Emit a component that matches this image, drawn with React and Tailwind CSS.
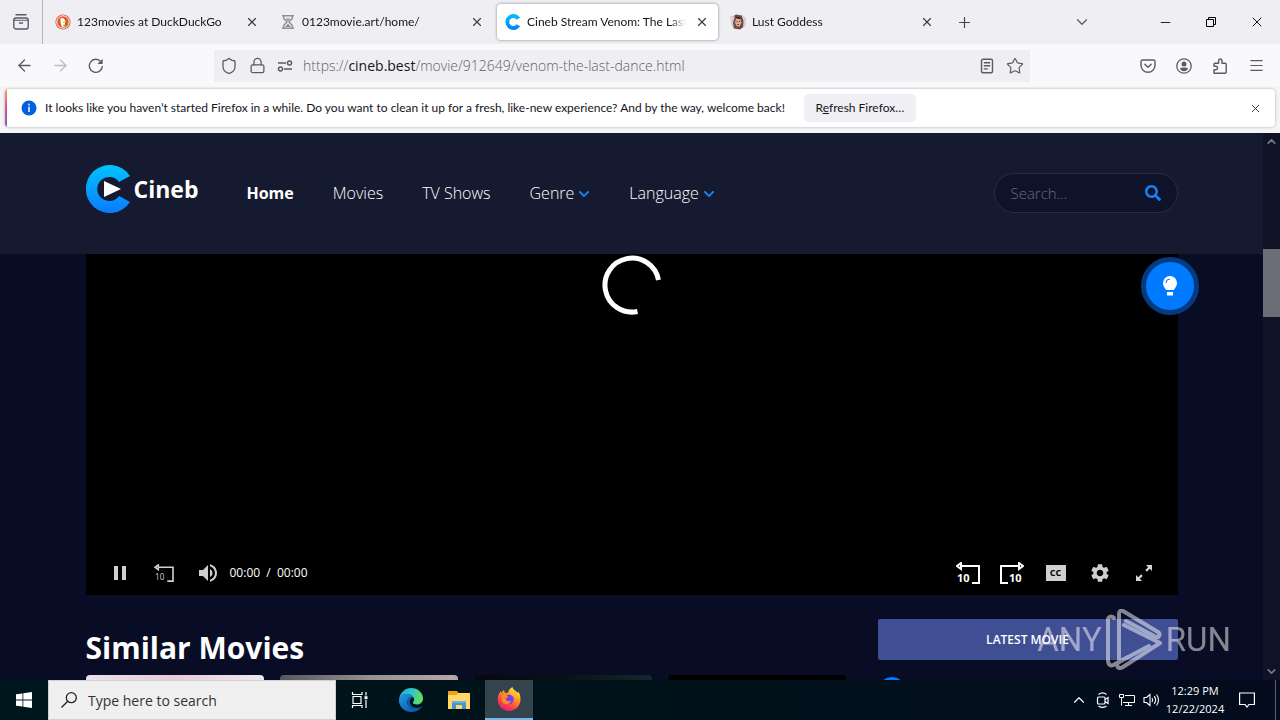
import React from 'react';
import {
  ArrowLeft,
  ArrowRight,
  ChevronDown,
  ChevronUp,
  Lock,
  Menu,
  Minus,
  Plus,
  Shield,
  Star,
  X,
} from 'lucide-react';
import { FaChevronDown, FaSearch } from 'react-icons/fa';
import { MdPause, MdSettings, MdVolumeUp } from 'react-icons/md';

const CinebMark = ({ className, play }) => (
  <svg viewBox="0 0 45 48" className={className} aria-hidden="true">
    <defs>
      <linearGradient id="cineb" x1="0" y1="0" x2="0" y2="1">
        <stop offset="0" stopColor="#00c3ff" />
        <stop offset="1" stopColor="#0a7cff" />
      </linearGradient>
    </defs>
    <path d="M44 11A24 24 0 1 0 44 37L33 31A12 12 0 1 1 33 17Z" fill="url(#cineb)" />
    {play && <path d="M18 16v16l17-8z" fill="#fff" />}
  </svg>
);

const DuckIcon = () => (
  <svg viewBox="0 0 16 16" className="size-4">
    <circle cx="8" cy="8" r="7.6" fill="#de5833" />
    <circle cx="8" cy="8" r="6.2" fill="none" stroke="#fff" strokeWidth="1" />
    <path d="M5.6 4.2c2-.9 4.400.3 4.500 2.800.1 2-.6 3 .2 4.900-1.400 1-2.600 1-3.600.5C6 10.500 5 7 5.600 4.200z" fill="#fff" />
    <path d="M8 7.600h3.300l-1.400 1.200L8 9z" fill="#fdd20a" />
    <path d="M8.500 10.300l2.800 1-.2 1.200-2.600-.6z" fill="#65bc46" />
  </svg>
);

const HourglassIcon = () => (
  <svg viewBox="0 0 16 16" className="size-4" fill="none" stroke="#8f8f96" strokeWidth="1.4">
    <path d="M2 1.700h12M2 14.300h12M3.700 2v2.500L7 8l-3.300 3.500V14M12.300 2v2.500L9 8l3.300 3.500V14" />
    <path d="M5.500 4.500h5L8 7.300zM5 13l3-3.200L11 13z" fill="#8f8f96" stroke="none" />
  </svg>
);

const GoddessIcon = () => (
  <svg viewBox="0 0 16 16" className="size-4">
    <path d="M2 3l4-2.500 6 1 3 4-1 7-4 3-6-1L1 9z" fill="#6b4a4c" />
    <path d="M0 2l5 .5-2 6 1 5-3-4zM11 0l5 4v7l-3 3 .5-7z" fill="#d8d0d3" />
    <path d="M6 4.500h4l1.500 4-2 4H7l-2-3.500z" fill="#e2ac94" />
    <path d="M5.500 3l3 1.500L11 4M6.500 7.500h1M9 7.500h1" stroke="#4a2026" />
    <path d="M7 10.500h2" stroke="#b32a35" />
  </svg>
);

const TabsIcon = () => (
  <svg viewBox="0 0 16 16" className="size-4" fill="none" stroke="#5b5b66" strokeWidth="1.400" strokeLinecap="round">
    <path d="M3 .8h10M6.500 9h3" />
    <rect x=".8" y="4" width="14.400" height="11" rx="2.200" />
    <path d="M1 6.300h14" strokeWidth="1" />
  </svg>
);

const ReloadIcon = () => (
  <svg viewBox="0 0 16 16" className="size-4" fill="none" stroke="#5b5b66" strokeWidth="1.400" strokeLinecap="round">
    <path d="M14.300 8.600A6.500 6.500 0 1 1 12.800 3.600" />
    <path d="M14.700.8v5.300H9.400z" fill="#5b5b66" stroke="none" />
  </svg>
);

const PermissionsIcon = () => (
  <svg viewBox="0 0 16 16" className="size-4" fill="none" stroke="#5b5b66" strokeWidth="1.500">
    <path d="M1 5h8M7 11h8" />
    <circle cx="12.500" cy="5" r="2" />
    <circle cx="3.500" cy="11" r="2" />
  </svg>
);

const ReaderIcon = () => (
  <svg viewBox="0 0 16 16" className="size-4" fill="none" stroke="#5b5b66" strokeWidth="1.400" strokeLinecap="round">
    <rect x="2.500" y="1.200" width="11" height="13.500" rx="1.500" />
    <path d="M5.300 4.700h5.400M5.300 7.800h5.400M5.300 10.900h3" />
  </svg>
);

const PocketIcon = () => (
  <svg viewBox="0 0 16 16" className="size-4" fill="none" stroke="#5b5b66" strokeWidth="1.400" strokeLinecap="round" strokeLinejoin="round">
    <path d="M2.500 2h11c.8 0 1.500.7 1.500 1.500v3.700a7 7 0 0 1-14 0V3.500C1 2.700 1.700 2 2.500 2z" />
    <path d="M4.800 6.200L8 9.200l3.200-3" />
  </svg>
);

const AccountIcon = () => (
  <svg viewBox="0 0 16 16" className="size-4">
    <circle cx="8" cy="8" r="7.200" fill="none" stroke="#5b5b66" strokeWidth="1.300" />
    <circle cx="8" cy="5.900" r="2.500" fill="#5b5b66" />
    <path d="M3.800 10.300c2.500-1.200 5.900-1.200 8.400 0-.8 1.900-2.300 3-4.200 3s-3.400-1.100-4.200-3z" fill="#5b5b66" />
  </svg>
);

const ExtensionsIcon = () => (
  <svg viewBox="0 0 16 16" className="size-4" fill="none" stroke="#5b5b66" strokeWidth="1.400" strokeLinejoin="round">
    <path d="M2 15.200h11.200c.6 0 1-.4 1-1V6.200c0-.6-.4-1-1-1H10V2.700a1.700 1.700 0 0 0-3.400 0v2.500H3c-.6 0-1 .4-1 1v2h1.800a1.800 1.800 0 0 1 0 3.600H2z" />
  </svg>
);

const RestoreIcon = () => (
  <svg viewBox="0 0 10 10" className="size-[10px]" fill="none" stroke="#000">
    <path d="M.5 2.500h7v7h-7zM2.500 2.500v-2h7v7h-2" />
  </svg>
);

const InfoIcon = () => (
  <svg viewBox="0 0 16 16" className="size-4 shrink-0">
    <circle cx="8" cy="8" r="7.500" fill="#0061e0" />
    <path d="M8 3.800v1.600M8 6.800v5.200" stroke="#fff" strokeWidth="1.500" />
  </svg>
);

const BulbIcon = () => (
  <svg viewBox="0 0 14 20" className="h-5 w-[14px]" fill="#fff">
    <path d="M7 0a7 7 0 0 1 7 7c0 3.500-2.200 4.600-3 7H3C2.200 11.600 0 10.500 0 7a7 7 0 0 1 7-7zM4 16h6v3.500H4z" />
    <path d="M3 7a4 4 0 0 1 4-4" fill="none" stroke="#007bff" strokeWidth="1" />
  </svg>
);

const Skip10 = ({ forward, small }) => (
  <svg
    viewBox="0 0 24 22"
    className={small ? 'h-[18px] w-5' : 'h-[22px] w-6'}
    fill="none"
    stroke={small ? '#d0d0d0' : '#fff'}
    strokeWidth="2"
  >
    {forward ? (
      <path d="M19 4H1v17h7M19 1l4 3-4 3z" />
    ) : (
      <path d="M5 4h18v17h-7M5 1L1 4l4 3z" />
    )}
    <text
      x={forward ? 9 : 1}
      y="20"
      fontSize={small ? 10 : 11}
      fontWeight={small ? 400 : 700}
      fontFamily="Open Sans, sans-serif"
      fill={small ? '#d0d0d0' : '#fff'}
      stroke="none"
    >
      10
    </text>
  </svg>
);

const ExpandIcon = () => (
  <svg viewBox="0 0 16 16" className="size-4" fill="#d6d6d6">
    <path d="M10 0h6v6l-2.200-2.200-2.900 2.900-1.600-1.600 2.900-2.900zM0 10l2.200 2.200 2.900-2.900 1.600 1.600-2.900 2.900L6 16H0z" />
  </svg>
);

const WindowsIcon = () => (
  <svg viewBox="0 0 16 16" className="size-4" fill="#fff">
    <path d="M0 2.300l6.500-.9v6.200H0zM7.300 1.300L16 0v7.600H7.300zM0 8.400h6.500v6.200L0 13.700zM7.300 8.400H16V16l-8.700-1.300z" />
  </svg>
);

const TaskViewIcon = () => (
  <svg viewBox="0 0 18 16" className="h-4 w-[18px]" fill="none" stroke="#fff" strokeWidth="1.200">
    <path d="M2 4.500h8v7H2zM1.500 0v2.500h9.500V0M1.500 16v-2.500h9.500V16M15 0v3.500M15 8v8" />
    <path d="M13.500 4.200h3v3h-3z" fill="#fff" stroke="none" />
  </svg>
);

const EdgeIcon = () => (
  <svg viewBox="0 0 24 24" className="size-6">
    <defs>
      <linearGradient id="edgeTop" x1="0" y1=".3" x2="1" y2=".5">
        <stop offset="0" stopColor="#2aa9e0" />
        <stop offset=".5" stopColor="#2fc5c8" />
        <stop offset="1" stopColor="#66df55" />
      </linearGradient>
      <linearGradient id="edgeBottom" x1="0" y1="0" x2="1" y2="1">
        <stop offset="0" stopColor="#1b9de2" />
        <stop offset="1" stopColor="#0c4c9c" />
      </linearGradient>
    </defs>
    <path d="M0 11.500C1 4.500 6 0 12.200 0 19 0 24 5 24 10.500c0 3.500-2.600 6-6 6-2.500 0-4.500-.8-4.200-2 .2-.8 1.200-1.300 1.200-3.100C15 8.500 11.800 6 8 6 4.500 6 1.500 8 0 11.500z" fill="url(#edgeTop)" />
    <path d="M0 12c.6-3.500 4-6 8-6 3.200 0 5.500 1.500 6.400 3.300-3.400-1-6 1.400-6 4.700 0 4.500 4.200 7.200 8.600 6.700 2.300-.3 4-1.200 5.200-2.200.4-.3.800 0 .5.500C20.700 22 17 24 12.500 24 5.500 24-.5 18.500 0 12z" fill="url(#edgeBottom)" />
    <path d="M8.400 14c0-3.300 2.600-5.700 6-4.700-1.800.2-3.600 2.200-3.600 4.500 0 4 4 7 9.400 5.600-4.400 3.600-11.800.8-11.800-5.400z" fill="#125aa8" />
  </svg>
);

const FolderIcon = () => (
  <svg viewBox="0 0 22 18" className="h-[18px] w-[22px]">
    <path d="M0 0h9l1.500 2H0z" fill="#e8a317" />
    <path d="M0 2h22v16H0z" fill="#ffd867" />
    <path d="M0 2h10l-1.500 2H0z" fill="#e8a317" />
    <path d="M4 18v-8h14v8h-4v-4H8v4z" fill="#3f96d2" />
    <path d="M4 10h14v2H4z" fill="#5db4e8" />
  </svg>
);

const FirefoxIcon = () => (
  <svg viewBox="0 0 24 24" className="size-6">
    <defs>
      <linearGradient id="fox" x1=".8" y1="0" x2=".2" y2="1">
        <stop offset="0" stopColor="#fff44f" />
        <stop offset=".35" stopColor="#ff9a1f" />
        <stop offset=".7" stopColor="#ff4245" />
        <stop offset="1" stopColor="#e31587" />
      </linearGradient>
    </defs>
    <path d="M15.500 0c.4 3 4 4 5.500 6 .3-.6.3-1 .2-1.700C23 7 23.500 9.500 23.500 12.500 23.500 19 18.200 24 12 24S.7 19 .7 12.800C.7 9 2 6 3.800 4l.5 2.200C5 4.500 6 3.500 7.200 3c-.1 1.200.2 2 .9 2.800 1 0 2-.1 2.800.1C11.500 3.500 13 1 15.500 0z" fill="url(#fox)" />
    <circle cx="12" cy="12.500" r="4.800" fill="#7542e5" />
    <path d="M5 8.500c2.500-1 4.500-.3 6.500 1.300-1.200.2-1.300 1.400-3 1.900.3 2.500 3.500 3.300 5.700 1.700-.5 3-4 5-7.200 3.200C4.500 15 4 11.500 5 8.500z" fill="#ff8a24" />
    <path d="M14 4c4 3 6 7 3.500 12 2-5-.5-8-4.500-9.500z" fill="#ffbd30" />
  </svg>
);

const CameraIcon = () => (
  <svg viewBox="0 0 14 16" className="h-4 w-[14px]" fill="none" stroke="#fff" strokeWidth="1.200">
    <rect x="1.500" y="5" width="7.500" height="7" rx="1" />
    <path d="M9 7.500l3-2v6l-3-2M2.500 2.500c2.500-2 5.500-2 8 0M2.500 14c2.500 1.800 5.500 1.800 8 0" />
  </svg>
);

const NetworkIcon = () => (
  <svg viewBox="0 0 16 14" className="h-[14px] w-4" fill="none" stroke="#fff">
    <path d="M6 2.500h9.500v7H4M9.500 9.500v3M6 12.500h7M.5 1.500h4v3h-4zM2.500 4.500v8" />
  </svg>
);

const SpeakerIcon = () => (
  <svg viewBox="0 0 17 14" className="h-[14px] w-[17px]" fill="none" stroke="#fff" strokeWidth="1.100">
    <path d="M1 4.500h2.500L7 1.500v11L3.500 9.500H1zM9 5c.8 1.200.8 2.800 0 4M11.200 3.200c1.700 2.300 1.700 5.300 0 7.600M13.500 1.500c2.600 3.200 2.600 7.800 0 11" />
  </svg>
);

const NoticeIcon = () => (
  <svg viewBox="0 0 16 16" className="size-4" fill="none" stroke="#fff" strokeWidth="1.200">
    <path d="M.6 1h14.800v11.500h-5.400L8 15l-2-2.500H.6z" />
  </svg>
);

const tabs = [
  { title: '123movies at DuckDuckGo', icon: <DuckIcon /> },
  { title: '0123movie.art/home/', icon: <HourglassIcon /> },
  { title: 'Cineb Stream Venom: The Last Dance', icon: <CinebMark className="size-4" />, active: true },
  { title: 'Lust Goddess', icon: <GoddessIcon /> },
];

const navLinks = ['Movies', 'TV Shows'];
const navMenus = ['Genre', 'Language'];

const posters = [
  'bg-linear-to-r from-[#e9e2ec] via-[#e6cbd8] to-[#eeeaf0]',
  'bg-linear-to-r from-[#55565c] via-[#96918f] to-[#b5a9a8]',
  'bg-linear-to-r from-[#06090f] via-[#0a1014] to-[#14282c]',
  'bg-black',
];

const IconButton = ({ label, className = 'w-9', children }) => (
  <button type="button" aria-label={label} className={`flex h-8 shrink-0 items-center justify-center ${className}`}>
    {children}
  </button>
);

const TabStrip = () => (
  <div className="flex h-11 shrink-0 items-center bg-[#efeef3]">
    <div className="mr-1 flex h-11 w-[43px] shrink-0 items-center justify-center border-r border-[#b4b3ba]">
      <IconButton label="Recent browsing"><TabsIcon /></IconButton>
    </div>
    <div className="flex gap-1">
      {tabs.map((tab) => (
        <div
          key={tab.title}
          className={`flex h-9 w-[221px] items-center rounded pl-2 ${tab.active ? 'bg-white shadow-[0_0_3px_rgba(0,0,0,0.45)]' : ''}`}
        >
          <span className="shrink-0">{tab.icon}</span>
          <span className="ml-[6px] flex-1 overflow-hidden whitespace-nowrap mask-r-from-90%">{tab.title}</span>
          <IconButton label={`Close ${tab.title}`} className="w-8"><X size={14} strokeWidth={2} className="text-[#3c3c46]" /></IconButton>
        </div>
      ))}
    </div>
    <IconButton label="New tab" className="ml-[3px] w-9"><Plus size={17} strokeWidth={1.700} className="text-[#45454f]" /></IconButton>
    <div className="ml-auto flex items-center">
      <IconButton label="List all tabs" className="mr-[42px] w-9"><ChevronDown size={18} strokeWidth={1.700} className="text-[#5b5b66]" /></IconButton>
      <IconButton label="Minimize" className="w-[46px]"><Minus size={15} strokeWidth={1.500} /></IconButton>
      <IconButton label="Restore" className="w-[46px]"><RestoreIcon /></IconButton>
      <IconButton label="Close" className="w-[46px]"><X size={16} strokeWidth={1.500} /></IconButton>
    </div>
  </div>
);

const AddressBar = () => (
  <div className="flex h-[43px] shrink-0 items-center bg-[#f9f9fb] px-[6px] text-[#5b5b66]">
    <IconButton label="Back"><ArrowLeft size={19} strokeWidth={1.600} /></IconButton>
    <IconButton label="Forward"><ArrowRight size={19} strokeWidth={1.600} className="text-[#bdbdc4]" /></IconButton>
    <IconButton label="Reload"><ReloadIcon /></IconButton>
    <div className="ml-[100px] flex h-8 flex-1 items-center bg-[#efeff3] px-px">
      <IconButton label="Tracking protection" className="w-7"><Shield size={18} strokeWidth={1.700} /></IconButton>
      <IconButton label="Site information" className="w-7"><Lock size={17} strokeWidth={1.800} /></IconButton>
      <IconButton label="Permissions" className="w-7"><PermissionsIcon /></IconButton>
      <a href="#url" className="ml-1 flex-1 text-[14px] font-light text-[#5f5f68]">
        https://<span className="font-normal text-[#15141a]">cineb.best</span>/movie/912649/venom-the-last-dance.html
      </a>
      <IconButton label="Reader view" className="w-7"><ReaderIcon /></IconButton>
      <IconButton label="Bookmark" className="w-7"><Star size={18} strokeWidth={1.600} /></IconButton>
    </div>
    <div className="ml-[100px] flex">
      <IconButton label="Save to Pocket"><PocketIcon /></IconButton>
      <IconButton label="Account"><AccountIcon /></IconButton>
      <IconButton label="Extensions"><ExtensionsIcon /></IconButton>
      <IconButton label="Menu"><Menu size={17} strokeWidth={1.700} /></IconButton>
    </div>
  </div>
);

const Notification = () => (
  <div className="h-[46px] shrink-0 bg-[#f5f5f7] px-[5px] pt-[2px]">
    <div className="flex h-[38px] items-center overflow-hidden rounded bg-white shadow-[0_0_3px_rgba(0,0,0,0.3)]">
      <span className="h-full w-[2px] bg-linear-to-b from-[#ff9a57] via-[#d64f8e] to-[#8a4fd0]" />
      <span className="ml-[14px]"><InfoIcon /></span>
      <p className="ml-2 whitespace-nowrap">
        It looks like you haven’t started Firefox in a while. Do you want to clean it up for a fresh, like-new experience? And by the way, welcome back!
      </p>
      <button type="button" className="ml-[19px] h-7 w-28 shrink-0 rounded bg-[#f0f0f4] whitespace-nowrap">
        R<u>e</u>fresh Firefox…
      </button>
      <IconButton label="Dismiss" className="mr-1 ml-auto w-8"><X size={13} strokeWidth={1.500} /></IconButton>
    </div>
  </div>
);

const SiteHeader = () => (
  <header className="h-[121px] bg-[#151a30] pt-8">
    <div className="mx-auto flex h-14 max-w-[1092px] items-center">
      <a href="#home" className="flex h-12 items-center self-start text-[23px] font-bold">
        <CinebMark className="mr-[3px] h-12 w-[45px]" play />
        Cineb
      </a>
      <nav className="ml-12 flex items-center gap-[39px] text-[16px] font-light">
        <a href="#home" className="font-bold">Home</a>
        {navLinks.map((link) => <a key={link} href="#link">{link}</a>)}
        {navMenus.map((menu) => (
          <button key={menu} type="button" className="flex items-center gap-1">
            {menu}
            <FaChevronDown className="mt-px size-3 text-[#1a80f0]" />
          </button>
        ))}
      </nav>
      <form className="ml-auto flex h-10 w-[184px] items-center rounded-full border border-[#272b52] bg-[#0e1329] px-4">
        <input type="text" aria-label="Search" placeholder="Search..." className="w-full min-w-0 flex-1 bg-transparent text-[15px] font-light placeholder-[#656a82] outline-none" />
        <button type="button" aria-label="Search"><FaSearch className="size-4 text-[#1a80f0]" /></button>
      </form>
    </div>
  </header>
);

const Player = () => (
  <section className="relative flex h-[341px] flex-col justify-between bg-black font-['Open_Sans',sans-serif]">
    <svg viewBox="0 0 60 60" className="mx-auto mt-px size-[60px]" fill="none" stroke="#fff" strokeWidth="5">
      <path d="M56.500 25A27 27 0 1 0 35.500 56.500" />
    </svg>
    <div className="flex h-11 items-center px-3 text-[#d0d0d0]">
      <IconButton label="Pause" className="w-11"><MdPause className="size-6" /></IconButton>
      <IconButton label="Rewind 10 seconds" className="w-11"><Skip10 small /></IconButton>
      <IconButton label="Volume" className="w-11"><MdVolumeUp className="size-6" /></IconButton>
      <span className="whitespace-pre text-white">{'00:00  /  00:00'}</span>
      <div className="ml-auto flex">
        <IconButton label="Back 10 seconds" className="w-11"><Skip10 /></IconButton>
        <IconButton label="Forward 10 seconds" className="w-11"><Skip10 forward /></IconButton>
        <IconButton label="Captions" className="w-11">
          <span className="flex h-4 w-5 items-center justify-center bg-[#d0d0d0] text-[9px] font-bold text-black">CC</span>
        </IconButton>
        <IconButton label="Settings" className="w-11"><MdSettings className="size-[22px]" /></IconButton>
        <IconButton label="Fullscreen" className="w-11"><ExpandIcon /></IconButton>
      </div>
    </div>
    <button
      type="button"
      aria-label="Light"
      className="absolute top-[3px] -right-[21px] flex size-[58px] items-center justify-center rounded-full border-5 border-[#053a80] bg-[#007bff]"
    >
      <BulbIcon />
    </button>
  </section>
);

const Watermark = () => (
  <div className="pointer-events-none absolute right-[49px] bottom-2 flex h-16 items-center gap-1 font-['Roboto',sans-serif] text-[33px] font-normal text-white opacity-50">
    <span>ANY</span>
    <svg viewBox="0 0 56 62" className="h-[62px] w-14" fill="none" stroke="#fff" strokeWidth="4" strokeLinejoin="round" strokeLinecap="round">
      <path d="M8 9C5 6 2 8 2 11v40c0 5 3 7 7 4l34-18" />
      <path d="M13 50V5c0-3 2-4 4-3l35 21c3 2 1 6-2 5L20 12" />
      <path d="M18 16l36 18-37 24c-5 3-8-2-4-5l9-5" />
    </svg>
    <span>RUN</span>
  </div>
);

const Scrollbar = () => (
  <div className="flex w-[17px] shrink-0 flex-col items-center bg-[#0f1325] text-[#777a86]">
    <ChevronUp size={13} strokeWidth={3} className="mt-[2px]" />
    <div className="mt-[101px] h-[68px] w-full bg-[#6d6d78]" />
    <ChevronDown size={13} strokeWidth={3} className="mt-auto mb-[2px]" />
  </div>
);

const Taskbar = () => (
  <footer className="flex h-10 shrink-0 items-center bg-linear-to-r from-[#00161d] via-[#001219] to-[#030b1d] text-white">
    <IconButton label="Start" className="w-12"><WindowsIcon /></IconButton>
    <div className="flex h-10 w-72 items-center border border-[#d0d0d0] bg-[#f0f0f0] pl-3 text-black">
      <svg viewBox="0 0 16 16" className="size-4 shrink-0" fill="none" stroke="#222" strokeWidth="1.300">
        <circle cx="10.300" cy="5.700" r="5" />
        <path d="M6.700 9.300L.5 15.500" />
      </svg>
      <input type="text" aria-label="Type here to search" placeholder="Type here to search" className="ml-[11px] w-full bg-transparent text-[14px] placeholder-[#333] outline-none" />
    </div>
    <IconButton label="Task view" className="w-12"><TaskViewIcon /></IconButton>
    <IconButton label="Edge" className="ml-[3px] w-12"><EdgeIcon /></IconButton>
    <IconButton label="File Explorer" className="mr-[2px] w-12"><FolderIcon /></IconButton>
    <button type="button" aria-label="Firefox" className="flex h-10 w-12 items-center justify-center border-b-2 border-[#76b9ed] bg-[#33444c]">
      <FirefoxIcon />
    </button>
    <div className="ml-auto flex items-center">
      <IconButton label="Show hidden icons" className="w-6"><ChevronUp size={18} strokeWidth={1.500} /></IconButton>
      <IconButton label="Meet now" className="w-6"><CameraIcon /></IconButton>
      <IconButton label="Network" className="w-6"><NetworkIcon /></IconButton>
      <IconButton label="Sound" className="w-6"><SpeakerIcon /></IconButton>
      <div className="w-16 text-center text-[11px] leading-[18px] whitespace-nowrap">
        <div>12:29 PM</div>
        <div>12/22/2024</div>
      </div>
      <IconButton label="Notifications" className="w-10"><NoticeIcon /></IconButton>
      <span className="ml-2 h-10 w-[5px] border-l border-[#5b626c]" />
    </div>
  </footer>
);

export default function App() {
  return (
    <div className="flex h-screen flex-col overflow-hidden font-['Open_Sans',sans-serif] text-[12px] text-[#15141a]">
      <div className="shrink-0 font-['Lato',sans-serif]">
        <TabStrip />
      </div>
      <AddressBar />
      <div className="shrink-0 font-['Lato',sans-serif]">
        <Notification />
      </div>
      <div className="relative flex min-h-0 flex-1 overflow-hidden bg-[#080c25] text-white">
        <main className="min-w-0 flex-1">
          <SiteHeader />
          <div className="mx-auto max-w-[1092px]">
            <Player />
            <div className="mt-6 flex gap-8">
              <div className="min-w-0 flex-1">
                <h2 className="h-14 text-[30px] leading-[58px] font-bold">Similar Movies</h2>
                <div className="grid grid-cols-4 gap-4">
                  {posters.map((poster) => <div key={poster} className={`h-60 rounded ${poster}`} />)}
                </div>
              </div>
              <aside className="w-[300px]">
                <h3 className="flex h-[41px] items-center justify-center rounded-xs bg-[#404e93] font-semibold">LATEST MOVIE</h3>
                <div className="mt-[17px] size-7 rounded-full bg-[#007bff]" />
              </aside>
            </div>
          </div>
        </main>
        <Scrollbar />
        <Watermark />
      </div>
      <Taskbar />
    </div>
  );
}
